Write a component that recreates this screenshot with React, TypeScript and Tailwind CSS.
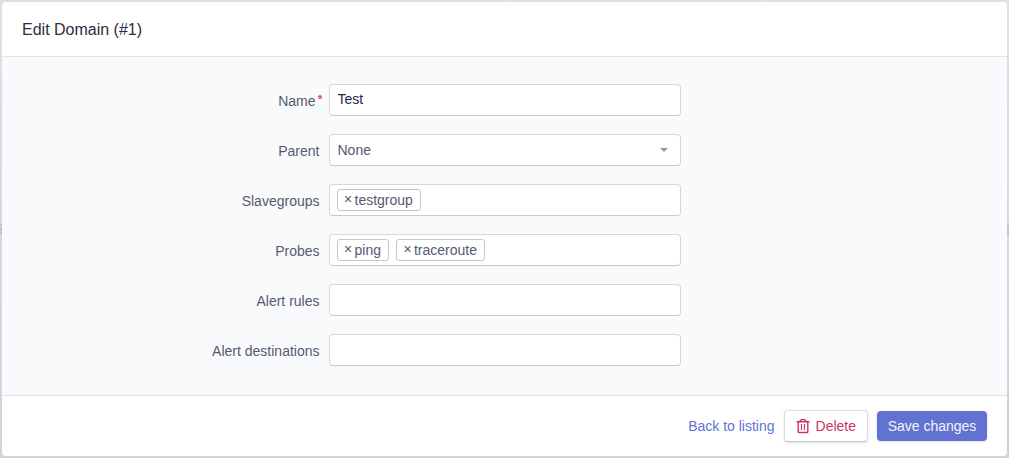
import { useState, type ReactNode } from "react";

function Row({ id, label, required, children }: { id: string; label: string; required?: boolean; children: ReactNode }) {
  return (
    <div className="grid grid-cols-[1fr_352px_1fr] items-center">
      <label htmlFor={id} className="flex justify-end pt-0.5 pr-[9px] leading-5 text-[#555a70]">
        <span className={required ? "relative mr-1" : "relative"}>
          {label}
          {required && <span className="absolute top-1 left-full ml-0.5 size-1 rounded-full bg-[#df5d7f]" />}
        </span>
      </label>
      {children}
    </div>
  );
}

function TagBox({ id, initial }: { id: string; initial: string[] }) {
  const [tags, setTags] = useState(initial);
  return (
    <div className="flex min-h-8 items-center gap-[7px] rounded border border-[#d5d6de] border-b-[#c8c9d2] bg-white px-[7px]">
      {tags.map((tag) => (
        <span key={tag} className="flex h-[22px] shrink-0 items-center rounded-[3px] border border-[#c5c6cc] pr-[7px] pl-1.5 leading-5 text-[#555a70]">
          <button
            type="button"
            aria-label={`Remove ${tag}`}
            className="mr-0.5 -mt-0.5 w-[9px] text-center leading-4"
            onClick={() => setTags(tags.filter((t) => t !== tag))}
          >
            ×
          </button>
          {tag}
        </span>
      ))}
      <input id={id} type="text" className="h-6 w-0 min-w-0 flex-1 outline-none" />
    </div>
  );
}

function Grip({ side }: { side: string }) {
  return (
    <div className={`absolute top-1/2 flex -translate-y-1/2 flex-col gap-px ${side}`} aria-hidden="true">
      <span className="h-[3px] w-0.5 bg-[#bfc2cc]" />
      <span className="h-[3px] w-0.5 bg-[#bfc2cc]" />
      <span className="h-[3px] w-0.5 bg-[#bfc2cc]" />
    </div>
  );
}

export default function App() {
  return (
    <main className="relative min-h-screen bg-linear-to-b from-[#dfe1e8] via-[#d6d7e1] to-[#d0d4dc] p-0.5 font-['Liberation_Sans',Arial,sans-serif] text-[14px]">
      <Grip side="left-0" />
      <Grip side="right-0" />
      <form className="overflow-hidden rounded bg-white" onSubmit={(e) => e.preventDefault()}>
        <header className="border-b border-[#e1e3ea] px-5 pt-4 pb-3.5">
          <h1 className="text-base leading-6 text-[#2b2d42]">Edit Domain (#1)</h1>
        </header>
        <div className="flex flex-col gap-[18px] bg-[#f9fafc] pt-[27px] pb-[29px]">
          <Row id="name" label="Name" required>
            <input
              id="name"
              type="text"
              required
              defaultValue="Test"
              className="h-8 w-full rounded border border-[#d5d6de] border-b-[#c8c9d2] bg-white px-2 pb-0.5 text-[#25273d] outline-none"
            />
          </Row>
          <Row id="parent" label="Parent">
            <div className="relative">
              <select
                id="parent"
                className="h-8 w-full appearance-none rounded border border-[#d5d6de] border-b-[#c8c9d2] bg-white px-2 text-[#555a70] outline-none"
              >
                <option>None</option>
              </select>
              <svg className="pointer-events-none absolute top-3.5 right-[13px] h-1 w-2" viewBox="0 0 8 4" fill="#999" aria-hidden="true">
                <path d="M0 0h8L4 4z" />
              </svg>
            </div>
          </Row>
          <Row id="slavegroups" label="Slavegroups">
            <TagBox id="slavegroups" initial={["testgroup"]} />
          </Row>
          <Row id="probes" label="Probes">
            <TagBox id="probes" initial={["ping", "traceroute"]} />
          </Row>
          <Row id="rules" label="Alert rules">
            <TagBox id="rules" initial={[]} />
          </Row>
          <Row id="destinations" label="Alert destinations">
            <TagBox id="destinations" initial={[]} />
          </Row>
        </div>
        <footer className="flex items-center justify-end gap-[9px] border-t border-[#e1e3ea] px-5 py-3.5">
          <a href="#listing" className="leading-5 text-[#6374d6]">
            Back to listing
          </a>
          <button
            type="button"
            className="flex h-8 items-center gap-1.5 rounded border border-[#dcdde4] border-b-[#c8c9d2] bg-white px-[11px] text-[#cb3560] shadow-sm"
          >
            <svg className="h-4 w-3.5" viewBox="0 0 14 16" fill="none" stroke="currentColor" strokeWidth="1.4" aria-hidden="true">
              <path d="M.6 3.8h12.8M4 3.6C4.2 2.2 5 1.5 7 1.5s2.8.7 3 2.1M2.2 4v9.7c0 .5.3.8.8.8h8c.5 0 .8-.3.8-.8V4" />
              <path strokeWidth="1.2" d="M5.5 6v6.2M8.5 6v6.2" />
            </svg>
            Delete
          </button>
          <button type="submit" className="h-[30px] min-w-[110px] rounded bg-[#6172d2] px-2.5 text-[#f3f4fc] shadow-sm">
            Save changes
          </button>
        </footer>
      </form>
    </main>
  );
}
